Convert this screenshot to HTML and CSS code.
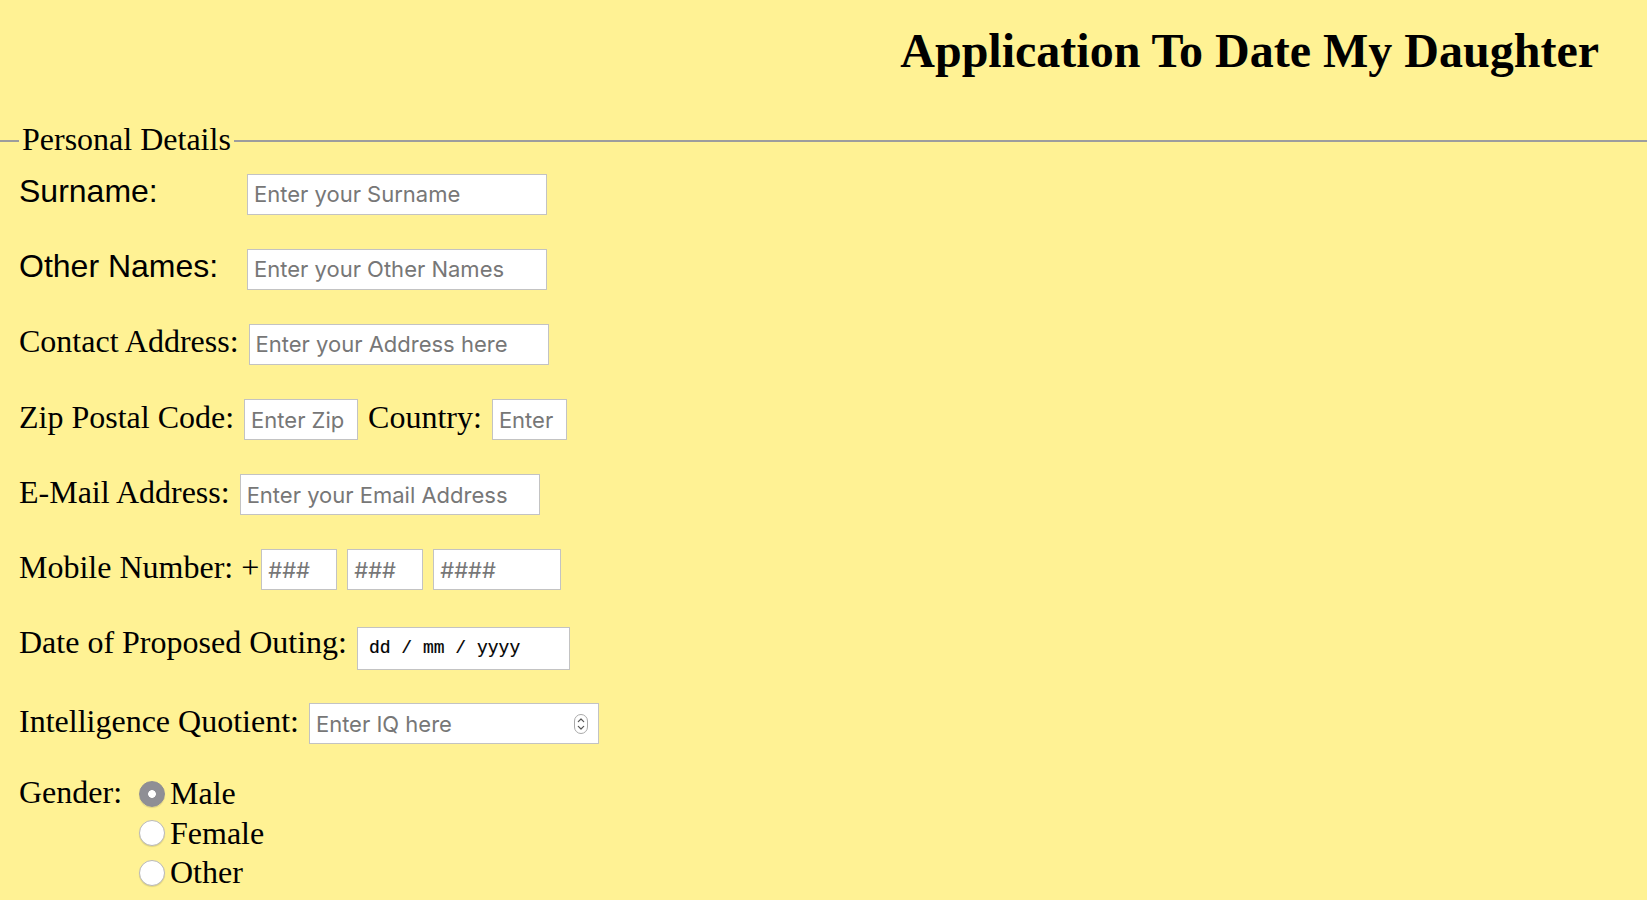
FILE: index.html
```html
<!DOCTYPE html>
<html lang="en">
<head>
<meta charset="utf-8">
<title>Application To Date My Daughter</title>
<link rel="stylesheet" href="styles.css">
</head>
<body>
<h1 class="title">Application To Date My Daughter</h1>
<form class="form">
  <fieldset class="group">
    <legend class="legend">Personal Details</legend>

    <div class="row">
      <label class="label sans wide" for="surname">Surname:</label>
      <input class="field w300" id="surname" type="text" placeholder="Enter your Surname">
    </div>

    <div class="row">
      <label class="label sans wide" for="other">Other Names:</label>
      <input class="field w300" id="other" type="text" placeholder="Enter your Other Names">
    </div>

    <div class="row">
      <label class="label" for="addr">Contact Address:</label>
      <input class="field w300 gap" id="addr" type="text" placeholder="Enter your Address here">
    </div>

    <div class="row">
      <label class="label" for="zip">Zip Postal Code:</label>
      <input class="field zip gap" id="zip" type="text" placeholder="Enter Zip">
      <label class="label gap" for="country">Country:</label>
      <input class="field country gap" id="country" type="text" placeholder="Enter">
    </div>

    <div class="row">
      <label class="label" for="email">E-Mail Address:</label>
      <input class="field w300 gap" id="email" type="email" placeholder="Enter your Email Address">
    </div>

    <div class="row">
      <label class="label" for="m1">Mobile Number: +</label>
      <input class="field m3 tight" id="m1" type="text" placeholder="###">
      <input class="field m3 gap" type="text" placeholder="###">
      <input class="field m4 gap" type="text" placeholder="####">
    </div>

    <div class="row row-date">
      <label class="label" for="date">Date of Proposed Outing:</label>
      <input class="field date gap" id="date" type="text" value="dd / mm / yyyy" readonly>
    </div>

    <div class="row row-iq">
      <label class="label" for="iq">Intelligence Quotient:</label>
      <span class="numbox gap">
        <input class="numinput" id="iq" type="text" placeholder="Enter IQ here">
        <svg class="spin" width="14" height="20" viewBox="0 0 14 20" aria-hidden="true">
          <rect x="0.5" y="0.5" width="13" height="19" rx="6.5" fill="#fff" stroke="#a9a9a9"/>
          <path d="M4.3 7.6 L7 5 L9.7 7.6" fill="none" stroke="#555" stroke-width="1.2" stroke-linecap="round" stroke-linejoin="round"/>
          <path d="M4.3 12.4 L7 15 L9.7 12.4" fill="none" stroke="#555" stroke-width="1.2" stroke-linecap="round" stroke-linejoin="round"/>
        </svg>
      </span>
    </div>

    <div class="row gender">
      <span class="label glabel">Gender:</span>
      <div class="options">
        <label class="opt"><input class="radio" type="radio" name="g" checked>Male</label>
        <label class="opt"><input class="radio" type="radio" name="g">Female</label>
        <label class="opt"><input class="radio" type="radio" name="g">Other</label>
      </div>
    </div>
  </fieldset>
</form>
</body>
</html>
```

FILE: styles.css
```css
html, body {
  margin: 0;
  padding: 0;
}

body {
  background: #fff294;
  color: #000;
  font-family: "Liberation Serif", "Times New Roman", serif;
  width: 1647px;
  min-height: 900px;
  overflow: hidden;
}

.title {
  margin: 23px 48px 0 0;
  font-family: "Liberation Serif", "Times New Roman", serif;
  font-weight: 700;
  font-size: 48px;
  line-height: 55px;
  text-align: right;
}

.form {
  margin: 43px 0 0 0;
}

.group {
  margin: 0;
  padding: 13px 19px 0 19px;
  border: 0;
  border-top: 2px solid #9d9d9d;
  min-width: 0;
}

.legend {
  padding: 0 3px 2px 3px;
  font-size: 32px;
  line-height: normal;
}

.row {
  display: flex;
  align-items: baseline;
  margin-bottom: 33.7px;
}

.row-date {
  margin-bottom: 33px;
}

.row-iq {
  margin-bottom: 30px;
}

.label {
  font-family: "Liberation Serif", "Times New Roman", serif;
  font-size: 32px;
  line-height: normal;
  white-space: nowrap;
}

.sans {
  font-family: "Liberation Sans", Arial, sans-serif;
}

.wide {
  width: 228px;
  flex: none;
}

.gap {
  margin-left: 10px;
}

.tight {
  margin-left: 2px;
}

.field {
  box-sizing: border-box;
  height: 41px;
  padding: 0 6px;
  border: 1px solid #c3c3c3;
  border-radius: 0;
  background: #fff;
  font-family: Inter, "Open Sans", sans-serif;
  font-size: 22px;
  color: #000;
  outline: none;
}

.field::placeholder,
.numinput::placeholder {
  color: #777;
}

.w300 { width: 300px; }
.zip { width: 114px; }
.country { width: 75px; }
.m3 { width: 76px; }
.m4 { width: 128px; }

.date {
  width: 213px;
  height: 43px;
  padding: 0 11px;
  font-family: "Liberation Mono", "Courier New", monospace;
  font-size: 18px;
  color: #000;
  -webkit-text-stroke: 0.2px #000;
}

.numbox {
  box-sizing: border-box;
  display: inline-flex;
  align-items: center;
  width: 290px;
  height: 41px;
  padding: 0 10px 0 6px;
  border: 1px solid #c3c3c3;
  background: #fff;
}

.numinput {
  flex: 1;
  min-width: 0;
  height: 100%;
  padding: 0;
  border: 0;
  background: transparent;
  font-family: Inter, "Open Sans", sans-serif;
  font-size: 22px;
  outline: none;
}

.spin {
  flex: none;
  display: block;
}

.gender {
  align-items: flex-start;
}

.glabel {
  width: 120px;
  flex: none;
}

.options {
  display: flex;
  flex-direction: column;
}

.opt {
  display: flex;
  align-items: center;
  font-size: 32px;
  line-height: 39.5px;
  height: 39.5px;
}

.radio {
  appearance: none;
  -webkit-appearance: none;
  box-sizing: border-box;
  width: 26px;
  height: 26px;
  margin: 0 5px 0 0;
  border-radius: 50%;
  border: 1px solid #b9b9b9;
  background: #fff;
  box-shadow: 0 1px 1px rgba(0, 0, 0, 0.12);
}

.radio:checked {
  border-color: #8d8d93;
  background: radial-gradient(circle, #fff 0 3.5px, #8f8f95 4.2px);
}
```
